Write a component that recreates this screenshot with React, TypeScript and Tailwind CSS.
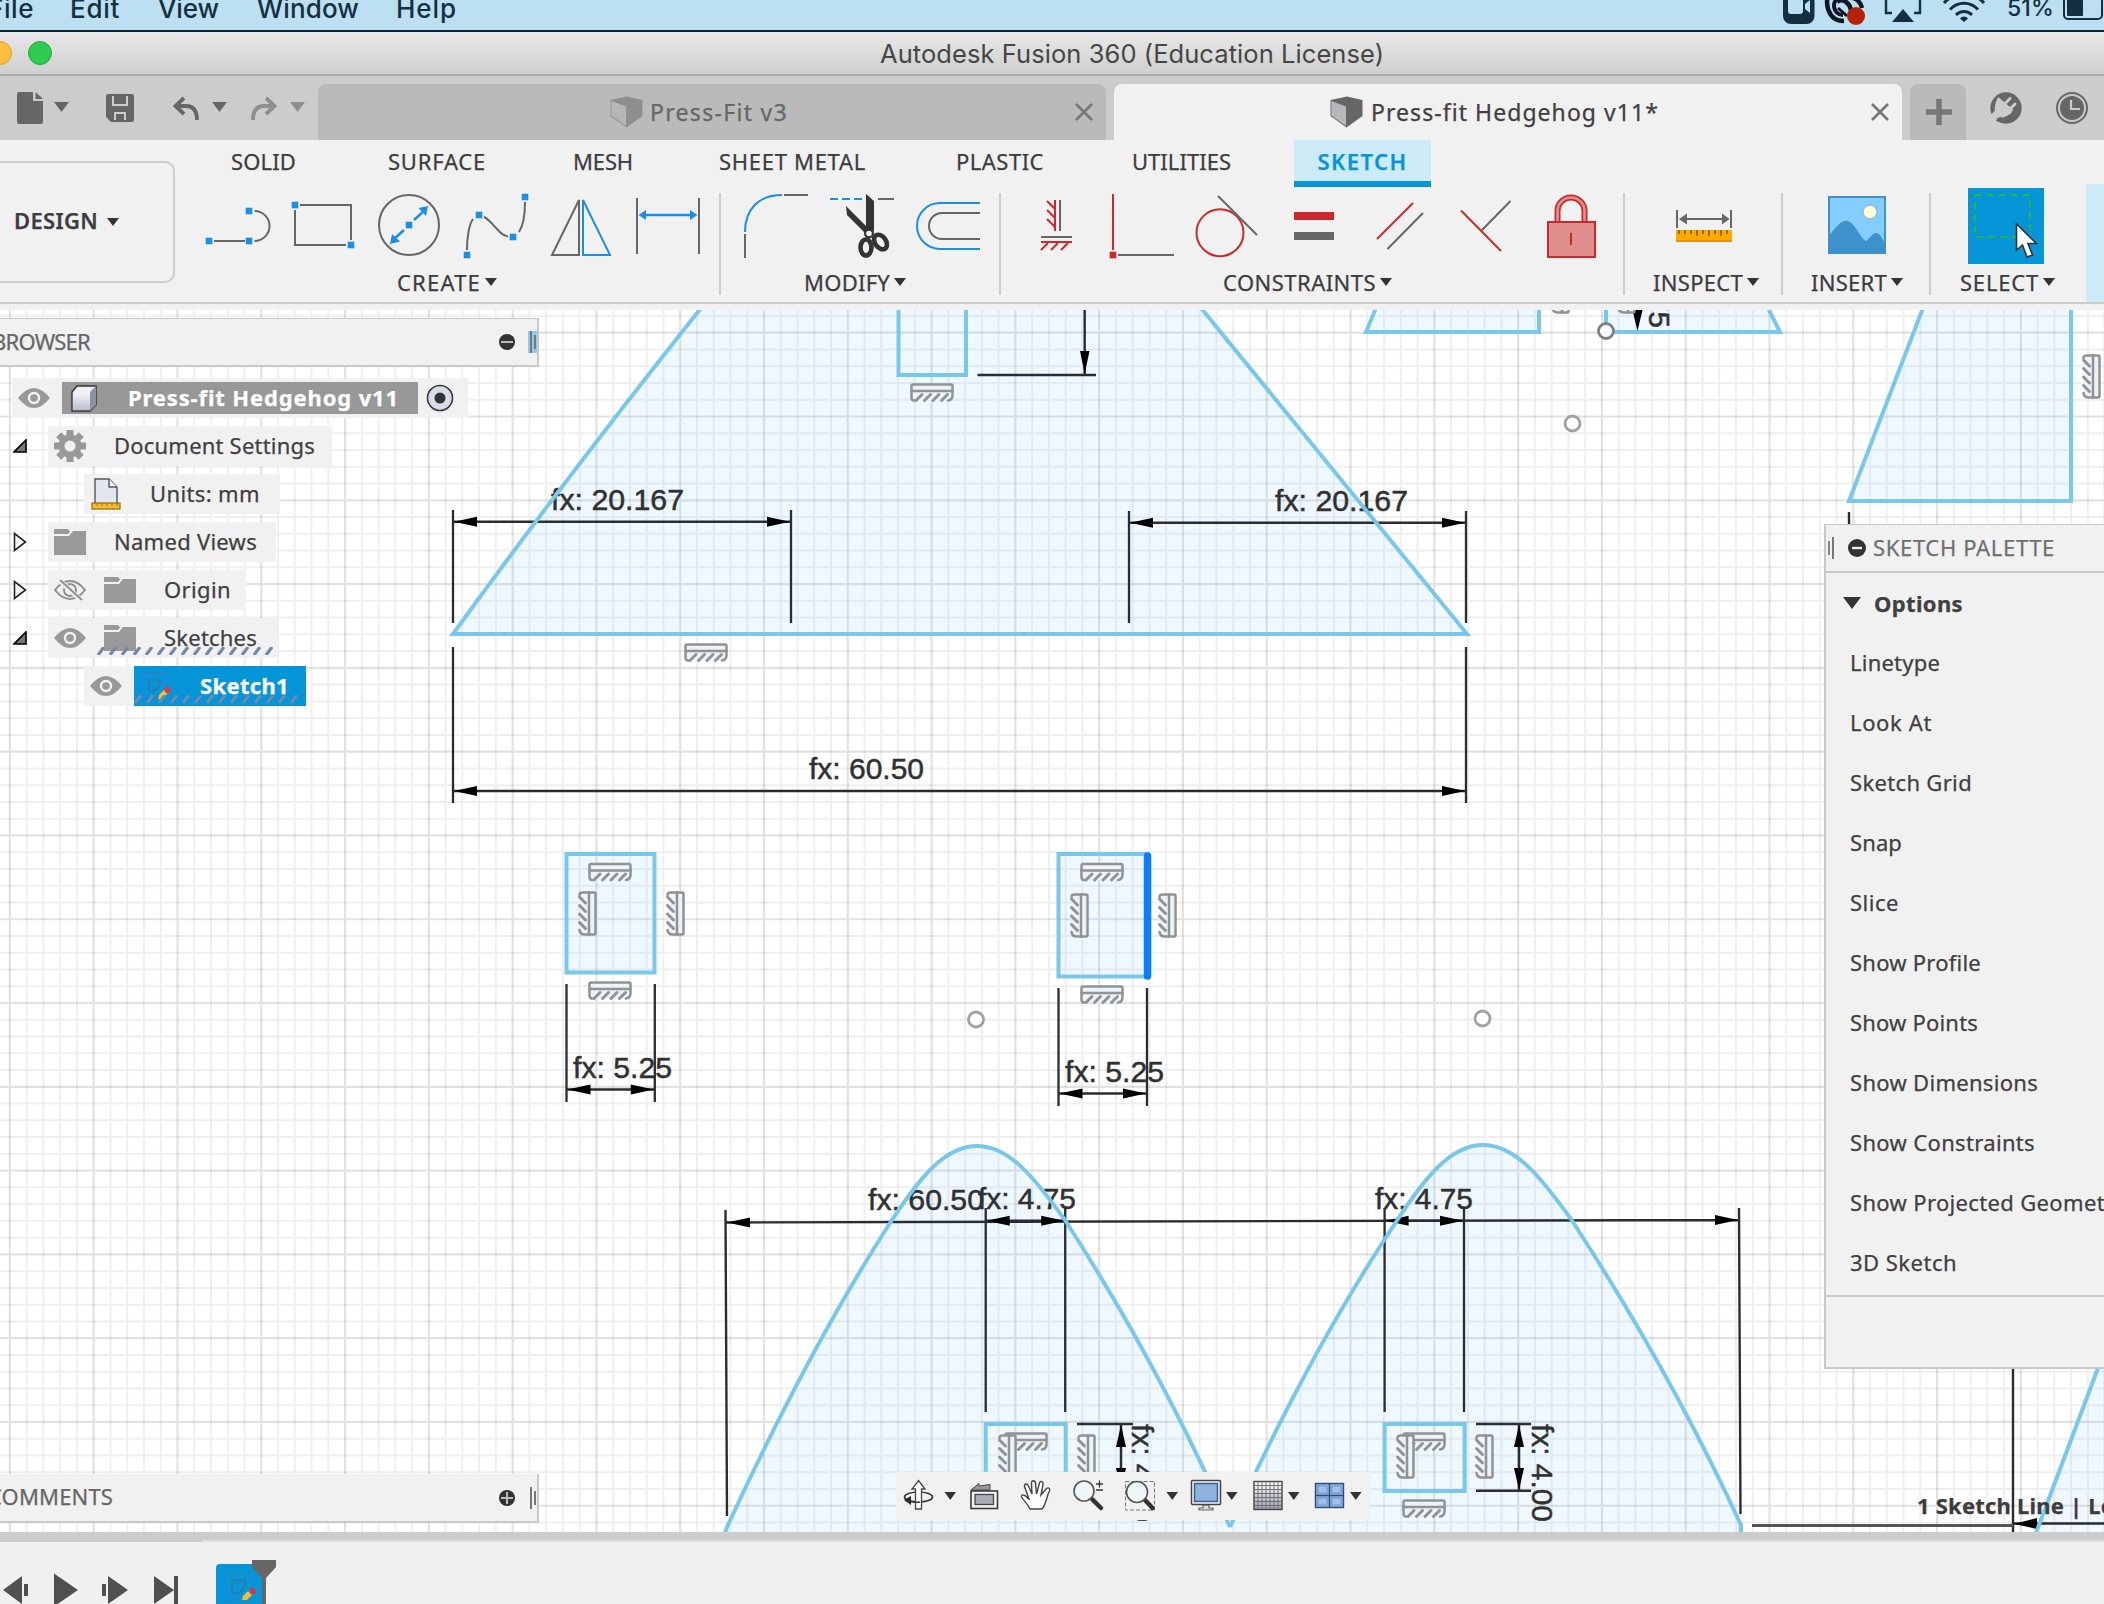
import React, { useLayoutEffect, useRef, useState } from "react";

const UI = "font-['Noto_Sans','Open_Sans',sans-serif] [-webkit-text-stroke:0.25px_currentColor]";
const SYS = "font-['Inter',sans-serif]";

/* A single line of text whose tracking is adjusted so that it fills a given width. */
function Fit({ w, className = "", children }: { w: number; className?: string; children: string }) {
  const ref = useRef<HTMLSpanElement>(null);
  const [ls, setLs] = useState(0);
  useLayoutEffect(() => {
    const el = ref.current;
    if (!el) return;
    el.style.letterSpacing = "0px";
    const natural = el.getBoundingClientRect().width;
    const next = (w - natural) / children.length;
    el.style.letterSpacing = next + "px";
    setLs(next);
  }, [w, children]);
  return (
    <span ref={ref} className={"inline-block shrink-0 whitespace-pre " + className} style={{ letterSpacing: ls }}>
      {children}
    </span>
  );
}

/* Icon drawn in window coordinates; the viewBox is the icon's own box. */
function Art({ x, y, w, h, className = "", children }: { x: number; y: number; w: number; h: number; className?: string; children?: React.ReactNode }) {
  return (
    <svg width={w} height={h} viewBox={`${x} ${y} ${w} ${h}`} className={"block shrink-0 " + className} fill="none">
      {children}
    </svg>
  );
}

const Tri = ({ className = "" }: { className?: string }) => (
  <svg width="12" height="8" viewBox="0 0 12 8" className={"block shrink-0 " + className}>
    <path d="M0 0H12L6 8Z" fill="#333" />
  </svg>
);

const Sq = ({ x, y, c = "#1b8ee8" }: { x: number; y: number; c?: string }) => <rect x={x - 3.3} y={y - 3.3} width="6.6" height="6.6" fill={c} />;

/* ---------- macOS menu bar ---------- */
function MenuBar() {
  return (
    <div className={"flex h-[32px] shrink-0 items-start overflow-hidden border-b-2 border-[#0e2435] bg-[#bcdff1] text-[26px] leading-[18px] font-medium text-[#12303f] " + SYS}>
      <Fit w={46} className="-ml-[12px]">File</Fit>
      <Fit w={50} className="ml-[36px]">Edit</Fit>
      <Fit w={61} className="ml-[38px]">View</Fit>
      <Fit w={102} className="ml-[38px]">Window</Fit>
      <Fit w={61} className="ml-[37px]">Help</Fit>
      <Art x={1780} y={0} w={36} h={30} className="ml-[1324px]">
        <rect x="1782" y="-9" width="31.5" height="33" rx="8" fill="#12303f" />
        <rect x="1787" y="-2" width="15" height="16" rx="3" fill="#bcdff1" />
        <path d="M1804 4L1809 0V13L1804 9Z" fill="#bcdff1" />
      </Art>
      <Art x={1820} y={0} w={50} h={30} className="ml-[4px]">
        <path d="M1828 -6C1824 2 1826 21 1843 21" stroke="#0a1626" strokeWidth="4.500" />
        <path d="M1840 -3C1829 0 1832 15 1842 15" stroke="#0a1626" strokeWidth="4" />
        <path d="M1836 2C1842 -3 1850 4 1850 12M1840 -2C1852 -5 1859 0 1861 8" stroke="#0a1626" strokeWidth="4.500" />
        <path d="M1837 8L1846 16" stroke="#0a1626" strokeWidth="3" />
        <circle cx="1855" cy="16" r="9" fill="#b52200" />
      </Art>
      <Art x={1882} y={0} w={40} h={30} className="ml-[12px]">
        <path d="M1891 13H1885V-3M1913 13H1919V-3" stroke="#12303f" strokeWidth="2.4" />
        <path d="M1902 9L1913 22H1891Z" fill="#12303f" />
      </Art>
      <Art x={1940} y={0} w={46} h={30} className="ml-[18px]">
        <g stroke="#12303f" strokeWidth="3">
          <path d="M1943 3A27 27 0 0 1 1983 3" />
          <path d="M1949 9.5A19 19 0 0 1 1977 9.5" />
          <path d="M1955 15A11 11 0 0 1 1971 15" />
        </g>
        <path d="M1959 18.5A5 5 0 0 1 1967 18.5L1963 22Z" fill="#12303f" />
      </Art>
      <Fit w={47} className="ml-[20px] text-[23px] leading-[16px]">51%</Fit>
      <Art x={2060} y={0} w={44} h={30} className="ml-[7px]">
        <rect x="2063" y="-6" width="38" height="25" rx="4" stroke="#12303f" strokeWidth="2" />
        <rect x="2066" y="-3" width="16" height="19" rx="1" fill="#12303f" />
      </Art>
    </div>
  );
}

function TitleBar() {
  return (
    <div className={"flex h-[44px] shrink-0 items-center border-b-2 border-[#adadad] bg-linear-to-b from-[#e9e9e9] to-[#cfcfcf] " + SYS}>
      <div className="-ml-[12px] size-[24px] rounded-full border border-[#e09c2c] bg-[#ffbd3e]" />
      <div className="ml-[16px] size-[24px] rounded-full border border-[#25a83a] bg-[#2ecb4c]" />
      <Fit w={504} className="mt-[2px] ml-[828px] text-[25.5px] leading-[40px] text-[#464646]">Autodesk Fusion 360 (Education License)</Fit>
    </div>
  );
}

/* ---------- document tabs ---------- */
const Cube = ({ dim }: { dim?: boolean }) => (
  <svg width="33" height="32" viewBox="0 0 33 32" className="block shrink-0">
    <path d="M0.5 4L17 0.5L32.5 4V20L16.5 31.5L0.5 20Z" fill={dim ? "#8f8f8f" : "#666"} />
    <path d="M1.3 5L16 10.5V30L1.3 19.5Z" fill={dim ? "#b3b7b7" : "#b4b8b8"} />
  </svg>
);
const Cross = () => (
  <svg width="18" height="18" viewBox="0 0 18 18" className="block shrink-0">
    <path d="M1 1L17 17M17 1L1 17" stroke="#777" strokeWidth="2.6" />
  </svg>
);

function TabBar() {
  return (
    <div className={"flex h-[64px] shrink-0 bg-[#ccc] text-[23px] " + UI}>
      <Art x={0} y={76} w={80} h={64}>
        <path d="M19 92H33V101H43V122Q43 124 41 124H19Q17 124 17 122V94Q17 92 19 92Z" fill="#666" />
        <path d="M35.5 92L43 99H35.5Z" fill="#666" />
        <path d="M54 102H69L61.5 112Z" fill="#666" />
      </Art>
      <Art x={80} y={76} w={70} h={64}>
        <path d="M108 94H132Q134 94 134 96V120Q134 122 132 122H111L106 117V96Q106 94 108 94Z" fill="#666" />
        <path d="M113 96V105H127V96M115 120V113H125V120" stroke="#ccc" strokeWidth="2" />
      </Art>
      <Art x={150} y={76} w={90} h={64}>
        <path d="M184 98L175.5 106L184 114M176 106H186C194 106 197 112 197 120" stroke="#666" strokeWidth="3.8" />
        <path d="M212 102H227L219.500 112Z" fill="#666" />
      </Art>
      <Art x={240} y={76} w={78} h={64}>
        <path d="M266 98L274.500 106L266 114M274 106H264C256 106 253 112 253 120" stroke="#8e8e8e" strokeWidth="3.8" />
        <path d="M290 102H305L297.500 112Z" fill="#8e8e8e" />
      </Art>
      <div className="mt-[8px] flex w-[788px] items-center rounded-t-lg bg-[#bababa] pr-[13px] pl-[292px] text-[#666]">
        <Cube dim />
        <Fit w={138} className="ml-[7px]">Press-Fit v3</Fit>
        <div className="ml-auto"><Cross /></div>
      </div>
      <div className="mt-[8px] ml-[8px] flex w-[788px] items-center rounded-t-lg bg-[#f1f1f1] pr-[13px] pl-[216px] text-[#404040]">
        <Cube />
        <Fit w={288} className="ml-[8px]">Press-fit Hedgehog v11*</Fit>
        <div className="ml-auto"><Cross /></div>
      </div>
      <div className="mt-[8px] ml-[8px] flex w-[56px] items-center justify-center rounded-t-lg bg-[#bababa] pl-[2px]">
        <svg width="26" height="26" viewBox="0 0 26 26"><path d="M13 0V26M0 13H26" stroke="#777" strokeWidth="5.500" /></svg>
      </div>
      <Art x={1966} y={76} w={76} h={64}>
        <circle cx="2006" cy="108" r="15.700" fill="#666" />
        <path d="M1998.500 98.500L2012 110L2010 113L2003 116.500L1999 115.500L1994 121L1990 117L1996 111C1995 107 1996 104 1998.500 98.500Z" fill="#ccc" stroke="#ccc" strokeLinejoin="round" strokeWidth="2" />
        <path d="M2005.500 103L2010 98.500M2010.500 108.500L2015 104" stroke="#ccc" strokeWidth="3" strokeLinecap="round" />
        <path d="M1991 122L1998 115.500" stroke="#ccc" strokeWidth="5" />
        <path d="M1998 117L2000 122L1996 121Z" fill="#666" />
      </Art>
      <Art x={2042} y={76} w={62} h={64}>
        <circle cx="2072" cy="108" r="15" stroke="#666" strokeWidth="2" />
        <circle cx="2072" cy="108" r="12" fill="#666" />
        <path d="M2071 100V109H2080" stroke="#ccc" strokeWidth="2.200" />
      </Art>
    </div>
  );
}

/* ---------- ribbon ---------- */
const G = "#666";
const B = "#1b8ee8";
const R = "#cc2a2a";
const Slot = ({ x, children }: { x: number; children: React.ReactNode }) => <Art x={x} y={187} w={86} h={82}>{children}</Art>;

function Group({ width, pad, icons, label, labelPad, labelWidth, sep = true }: { width: string; pad: string; icons: React.ReactNode; label: string; labelPad: string; labelWidth: number; sep?: boolean }) {
  return (
    <div className={"flex h-[116px] shrink-0 justify-between " + width}>
      <div className="flex flex-col">
        <div className={"flex h-[82px] " + pad}>{icons}</div>
        <div className={"-mt-px flex h-[28px] items-center leading-[28px] " + labelPad}>
          <Fit w={labelWidth}>{label}</Fit>
          <Tri className="ml-[4px]" />
        </div>
      </div>
      {sep && <div className="mt-[6px] h-[102px] w-[2px] bg-[#ccc]" />}
    </div>
  );
}

function CreateIcons() {
  return (
    <>
      <Slot x={195}>
        <path d="M214 241H245M254.500 211A15 15 0 0 1 254.500 241" stroke={G} strokeWidth="2" />
        <Sq x={209} y={241} /><Sq x={249} y={241} /><Sq x={249} y={211} />
      </Slot>
      <Slot x={281}>
        <path d="M300 205H351V240M346 245H295V210" stroke={G} strokeWidth="2" />
        <Sq x={295} y={205} /><Sq x={351} y={245} />
      </Slot>
      <Slot x={367}>
        <circle cx="409" cy="225" r="30" stroke={G} strokeWidth="2" />
        <path d="M394 239L404 230M414 220L424 211" stroke={B} strokeWidth="2.500" />
        <path d="M390 244L392 234L400 241.500ZM428 206L418.500 208L426 216Z" fill={B} />
        <Sq x={409} y={225} />
      </Slot>
      <Slot x={453}>
        <path d="M467 250C467 238 469 224 473 219M484 217C493 221 499 236 508 236.500M519 232C523 226 525 215 525 202" stroke={G} strokeWidth="2" />
        <Sq x={467} y={255} /><Sq x={479} y={215} /><Sq x={513} y={237} /><Sq x={525} y={197} />
      </Slot>
      <Slot x={539}>
        <path d="M579 200V255H552Z" stroke={G} strokeWidth="2" />
        <path d="M583 200V255H610Z" stroke={B} strokeWidth="2" />
      </Slot>
      <Slot x={625}>
        <path d="M637 198V254M699 198V254" stroke={G} strokeWidth="2" />
        <path d="M643 215H693" stroke={B} strokeWidth="2.600" />
        <path d="M638.500 215L646 210V220ZM697.500 215L690 210V220Z" fill={B} />
      </Slot>
    </>
  );
}

function ModifyIcons() {
  return (
    <>
      <Slot x={733}>
        <path d="M745 232C745 210 758 195 782 195" stroke={B} strokeWidth="2" />
        <path d="M784 195H808M745 234V258" stroke={G} strokeWidth="2" />
      </Slot>
      <Slot x={819}>
        <path d="M830 199H838M842 199H850M854 199H862" stroke={B} strokeWidth="2" />
        <path d="M878 199H894" stroke={G} strokeWidth="2" />
        <path d="M866 194L874 201V231L869 236L866 234L847 215L846 206L866 226Z" fill="#333" />
        <ellipse cx="866" cy="247.500" rx="5.500" ry="8" stroke="#333" strokeWidth="4.600" />
        <ellipse cx="880.500" cy="242" rx="5.500" ry="8" transform="rotate(-35 880.500 242)" stroke="#333" strokeWidth="4.600" />
        <circle cx="869" cy="233.500" r="5" fill="#333" />
        <circle cx="869" cy="233.500" r="2.800" fill="#f1f1f1" />
      </Slot>
      <Slot x={905}>
        <path d="M980 203H940A23 23 0 0 0 940 249H980" stroke={B} strokeWidth="2" />
        <path d="M980 213H942A13 13 0 0 0 942 239H980" stroke={G} strokeWidth="2" />
      </Slot>
    </>
  );
}

function ConstraintIcons() {
  return (
    <>
      <Slot x={1013}>
        <path d="M1055 200V231M1047 201L1055 209M1047 210L1055 218M1047 219L1055 227M1041 242H1072M1041 250L1048 243M1051 250L1058 243M1061 250L1068 243" stroke={R} strokeWidth="2" />
        <path d="M1060 200V231M1041 237H1072" stroke={G} strokeWidth="2" />
      </Slot>
      <Slot x={1099}>
        <path d="M1113 194V250" stroke={R} strokeWidth="2" />
        <path d="M1118 255H1174" stroke={G} strokeWidth="2" />
        <Sq x={1113} y={255} c={R} />
      </Slot>
      <Slot x={1185}>
        <circle cx="1220" cy="232.700" r="23.500" stroke={R} strokeWidth="2" />
        <path d="M1218 196L1257 235" stroke={G} strokeWidth="2" />
      </Slot>
      <Slot x={1271}>
        <rect x="1294" y="212" width="40" height="8" fill={R} />
        <rect x="1294" y="232" width="40" height="8" fill={G} />
      </Slot>
      <Slot x={1357}>
        <path d="M1377 239L1413 203" stroke={R} strokeWidth="2" />
        <path d="M1387.500 249L1423 213" stroke={G} strokeWidth="2" />
      </Slot>
      <Slot x={1443}>
        <path d="M1461 210.500L1501 251" stroke={R} strokeWidth="2" />
        <path d="M1510.500 201L1481.500 230.500" stroke={G} strokeWidth="2" />
      </Slot>
      <Slot x={1529}>
        <path d="M1557.500 222V211A13.500 13.500 0 0 1 1584.500 211V222" stroke={R} strokeWidth="6" />
        <path d="M1557.500 222V211A13.500 13.500 0 0 1 1584.500 211V222" stroke="#e08e8e" strokeWidth="2.600" />
        <rect x="1548" y="222" width="47" height="35" fill="#e08e8e" stroke={R} strokeWidth="2" />
        <path d="M1571 233V245" stroke={R} strokeWidth="2" />
      </Slot>
    </>
  );
}

const InspectIcon = () => (
  <Slot x={1661}>
    <path d="M1677 210V228M1731 210V228M1684 219H1724" stroke={G} strokeWidth="2" />
    <path d="M1679 219L1687 213.500V224.500ZM1729.500 219L1722 213.500V224.500Z" fill={G} />
    <rect x="1676" y="230" width="56" height="12" fill="#ffa800" />
    <rect x="1676" y="240" width="56" height="2" fill="#e39400" />
    <path d="M1679 230V234M1685 230V234M1691 230V234M1697 230V236M1703 230V234M1709 230V236M1715 230V234M1721 230V236M1727 230V234" stroke="#7a5a1a" strokeWidth="1.500" />
  </Slot>
);
const InsertIcon = () => (
  <Slot x={1814}>
    <rect x="1829" y="197" width="56" height="56" fill="#85ccff" />
    <path d="M1829 236C1838 224 1844 218 1850 222C1856 226 1862 240 1866 241C1870 238 1873 232 1877 233C1881 235 1882 239 1885 243V253H1829Z" fill="#3e92cc" />
    <circle cx="1870" cy="212" r="7" fill="#ffffcf" stroke="#8fc1dd" strokeWidth="1.500" />
    <rect x="1829" y="197" width="56" height="56" stroke="#3e92cc" strokeWidth="2" />
  </Slot>
);
const SelectIcon = () => (
  <Slot x={1963}>
    <rect x="1968" y="188" width="76" height="76" fill="#0696d7" />
    <rect x="1975" y="195" width="55" height="42" stroke="#2db24a" strokeWidth="2" strokeDasharray="7 5" />
    <path d="M2016.500 224V250L2022.500 245L2027 257L2032.500 255L2028 243.500H2036.500Z" fill="#fff" stroke="#333" strokeWidth="1.600" />
  </Slot>
);

function Ribbon() {
  return (
    <div className={"flex h-[170px] shrink-0 bg-[#f1f1f1] text-[22px] text-[#3c3c3c] " + UI}>
      <div className="flex h-[164px] w-full border-b-2 border-[#ccc]">
        <div className="flex w-[195px] shrink-0 items-start">
          <div className="mt-[21px] -ml-[20px] flex h-[122px] w-[195px] items-center rounded-[10px] border-2 border-[#ccc] pl-[32px] font-semibold">
            <Fit w={84} className="-mt-[3px]">DESIGN</Fit>
            <Tri className="ml-[9px]" />
          </div>
        </div>
        <div className="flex flex-col">
          <div className="flex h-[47px] leading-[42px]">
            <Fit w={65} className="ml-[36px]">SOLID</Fit>
            <Fit w={98} className="ml-[92px]">SURFACE</Fit>
            <Fit w={60} className="ml-[87px]">MESH</Fit>
            <Fit w={147} className="ml-[86px]">SHEET METAL</Fit>
            <Fit w={88} className="ml-[90px]">PLASTIC</Fit>
            <Fit w={99} className="ml-[88px]">UTILITIES</Fit>
            <div className="ml-[63px] flex h-[47px] w-[137px] justify-center border-b-[6px] border-[#0696d7] bg-[#cdebf6] font-semibold text-[#0696d7]">
              <Fit w={90}>SKETCH</Fit>
            </div>
          </div>
          <div className="flex">
            <Group width="w-[526px]" pad="" icons={<CreateIcons />} label="CREATE" labelPad="pl-[202px]" labelWidth={84} />
            <Group width="w-[280px]" pad="pl-[12px]" icons={<ModifyIcons />} label="MODIFY" labelPad="pl-[83px]" labelWidth={86} />
            <Group width="w-[624px]" pad="pl-[12px]" icons={<ConstraintIcons />} label="CONSTRAINTS" labelPad="pl-[222px]" labelWidth={153} />
            <Group width="w-[158px]" pad="pl-[36px]" icons={<InspectIcon />} label="INSPECT" labelPad="pl-[28px]" labelWidth={90} />
            <Group width="w-[148px]" pad="pl-[31px]" icons={<InsertIcon />} label="INSERT" labelPad="pl-[28px]" labelWidth={76} />
            <Group width="w-[155px]" pad="pl-[32px]" icons={<SelectIcon />} label="SELECT" labelPad="pl-[29px]" labelWidth={79} sep={false} />
            <div className="-mt-[3px] h-[118px] w-[18px] shrink-0 bg-[#cdebf6]" />
          </div>
        </div>
      </div>
    </div>
  );
}

/* ---------- sketch canvas ---------- */
const INK = "#2a2d2f";
const LINE = "#79c7eb";
const GRID = 83.79;

function GridLines() {
  const minor: string[] = [];
  const major: string[] = [];
  for (let i = -1; i < 127; i++) (i % 5 === 0 ? major : minor).push(`M${(9.9 + (i * GRID) / 5).toFixed(2)} 310V1532`);
  for (let i = -1; i < 73; i++) (i % 5 === 0 ? major : minor).push(`M0 ${(332.7 + (i * GRID) / 5).toFixed(2)}H2104`);
  return (
    <g>
      <path d={minor.join("")} stroke="#000" strokeOpacity="0.062" strokeWidth="2" />
      <path d={major.join("")} stroke="#000" strokeOpacity="0.115" strokeWidth="2.200" />
    </g>
  );
}

function Glyph({ n }: { n: number }) {
  const teeth = [6, 14.5, 23, 31.5].map((t) => `M${t} 17.5L${t + 6} 11.5`).join("");
  return (
    <g stroke="#909395" strokeWidth="2.500" strokeLinecap="round">
      <path d={`M4 17.500Q1.500 17.500 1.500 14.500V3Q1.500 1.500 3 1.500H${n - 3}Q${n - 1.5} 1.500 ${n - 1.5} 3V13Q${n - 2} 17 ${n - 6} 17.500`} fill="#edf3f6" />
      <path d={`M1.500 8H${n - 1.5}`} />
      <path d={teeth} strokeWidth="3" />
    </g>
  );
}
const HGlyph = ({ x, y }: { x: number; y: number }) => <g transform={`translate(${x} ${y})`}><Glyph n={44} /></g>;
const VGlyph = ({ x, y }: { x: number; y: number }) => <g transform={`translate(${x + 19} ${y}) rotate(90)`}><Glyph n={45} /></g>;

/* Horizontal dimension: two extension lines joined by a double-headed arrow. */
function HDim({ x1, x2, y, top, bottom }: { x1: number; x2: number; y: number; top: number; bottom: number }) {
  return (
    <g>
      <path d={`M${x1} ${top}V${bottom}M${x2} ${top}V${bottom}`} stroke={INK} strokeWidth="2.300" />
      <path d={`M${x1} ${y}H${x2}`} stroke={INK} strokeWidth="2.500" />
      <path d={`M${x1 + 1} ${y}L${x1 + 24} ${y - 5}V${y + 5}ZM${x2 - 1} ${y}L${x2 - 24} ${y - 5}V${y + 5}Z`} fill="#000" />
    </g>
  );
}
const NUM = "font-['Liberation_Sans',sans-serif]";
const Num = ({ x, y, w, children }: { x: number; y: number; w: number; children: string }) => (
  <text x={x} y={y} textLength={w} lengthAdjust="spacingAndGlyphs" fontSize="30" fill="#2f3133" stroke="#2f3133" strokeWidth="0.500" className={NUM}>{children}</text>
);
const VNum = ({ x, y, w, children }: { x: number; y: number; w: number; children: string }) => (
  <text transform={`translate(${x} ${y}) rotate(90)`} textLength={w} lengthAdjust="spacingAndGlyphs" fontSize="30" fill="#2f3133" stroke="#2f3133" strokeWidth="0.500" className={NUM}>{children}</text>
);
const Dot = ({ x, y, dark }: { x: number; y: number; dark?: boolean }) => <circle cx={x} cy={y} r="7.500" fill="#fff" stroke={dark ? "#808080" : "#a2a2a2"} strokeWidth="2.800" />;

const BODY = "M453 634Q562 483 701 308H1201Q1330 465 1467 634Z";
const HUMP1 = "M725 1533L727 1527C780 1412 836 1307 890 1223C920 1177 945 1146 977 1146C1009 1146 1034 1177 1065 1220C1120 1305 1180 1412 1230 1527";
const HUMP2 = "M1230 1527C1286 1404 1342 1303 1396 1222C1426 1176 1451 1145 1483 1145C1515 1145 1540 1176 1571 1219C1627 1305 1688 1410 1741 1525V1533";

function Canvas() {
  return (
    <svg width="2104" height="1222" viewBox="0 310 2104 1222" className="absolute inset-0 block" fill="none">
      <rect x="0" y="310" width="2104" height="1222" fill="#fff" />
      <GridLines />
      <g fill="#84ccf5" fillOpacity="0.13">
        <path d={BODY} />
        <path d="M1376 308L1366 332H1539V308ZM1606 308V332H1780L1768 308Z" />
        <path d="M1923 308L1849 501H2071V308Z" />
        <rect x="566.500" y="854" width="88" height="118.500" />
        <rect x="1058.500" y="854" width="88.500" height="122.500" />
        <path d={HUMP1 + "V1533Z"} />
        <path d={HUMP2 + "H1230Z"} />
        <path d="M2098 1368L2036 1533H2104V1368Z" />
      </g>

      <HDim x1={453} x2={791} y={521.7} top={510} bottom={623} />
      <HDim x1={1129} x2={1466} y={522.7} top={511} bottom={623} />
      <HDim x1={453} x2={1466} y={791} top={647} bottom={803} />
      <HDim x1={566.5} x2={654.8} y={1089.5} top={984} bottom={1102} />
      <HDim x1={1058.5} x2={1147} y={1093.5} top={988} bottom={1106} />
      <path d="M725.500 1210L727 1516M1739 1208L1740.500 1514M726 1222.500L1740 1220" stroke={INK} strokeWidth="2.400" />
      <path d="M727 1222.500L750 1217.500V1227.500ZM1738 1220L1715 1215V1225Z" fill="#000" />
      <HDim x1={985.7} x2={1065.2} y={1220.7} top={1208} bottom={1412} />
      <HDim x1={1384.6} x2={1464} y={1220.7} top={1208} bottom={1412} />
      <path d="M1084.700 310V374M977.500 375H1096" stroke={INK} strokeWidth="2.400" />
      <path d="M1084.700 374L1080 351H1089.500Z" fill="#000" />
      <path d="M1637.500 331L1632 308H1643Z" fill="#000" />
      <path d="M1849 512V526M2013 1368V1533M2013 1523.500H2104" stroke={INK} strokeWidth="2.400" />
      <path d="M1752 1525.500H2013" stroke="#555" strokeWidth="3" />
      <path d="M2014 1524L2037 1518V1529Z" fill="#000" />
      <path d="M1476 1424H1531M1476 1490.700H1531M1519 1424V1490M1077 1424H1133M1077 1490.700H1133M1121 1424V1490" stroke={INK} strokeWidth="2.500" />
      <path d="M1519 1425L1514 1447H1524ZM1519 1490L1514 1468H1524ZM1121 1425L1116 1447H1126ZM1121 1490L1116 1468H1126Z" fill="#000" />

      <Num x={551} y={509.5} w={133}>fx: 20.167</Num>
      <Num x={1275} y={510.5} w={133}>fx: 20.167</Num>
      <Num x={809} y={779} w={115}>fx: 60.50</Num>
      <Num x={573} y={1077.5} w={99}>fx: 5.25</Num>
      <Num x={1065} y={1081.5} w={99}>fx: 5.25</Num>
      <Num x={868} y={1209.5} w={116}>fx: 60.50</Num>
      <Num x={978} y={1208.5} w={98}>fx: 4.75</Num>
      <Num x={1375} y={1208.5} w={98}>fx: 4.75</Num>
      <VNum x={1532} y={1424} w={98}>fx: 4.00</VNum>
      <VNum x={1132} y={1424} w={98}>fx: 4.00</VNum>
      <VNum x={1649} y={231} w={97}>fx: 4.75</VNum>

      <g stroke={LINE} strokeWidth="4">
        <path d={BODY} />
        <path d="M898.500 308V375H966V308" />
        <path d="M1376 308L1366 332H1539V308M1606 308V332H1780L1768 308" />
        <path d="M1923 308L1849 501H2071V308" />
        <rect x="566.500" y="854" width="88" height="118.500" />
        <rect x="1058.500" y="854" width="88.500" height="122.500" />
        <path d={HUMP1} />
        <path d={HUMP2} />
        <rect x="985.700" y="1424" width="80" height="67" />
        <rect x="1384.600" y="1424" width="80" height="67" />
        <path d="M2098 1368L2036 1533" />
      </g>
      <path d="M1147.500 856V976" stroke="#0a7cff" strokeWidth="7.500" strokeLinecap="round" />

      <HGlyph x={910} y={383} />
      <HGlyph x={684} y={643} />
      <HGlyph x={588} y={862.5} />
      <HGlyph x={588} y={981} />
      <HGlyph x={1080} y={862.5} />
      <HGlyph x={1080} y={985} />
      <HGlyph x={1004} y={1432} />
      <HGlyph x={1004} y={1499} />
      <HGlyph x={1402} y={1432} />
      <HGlyph x={1402} y={1499} />
      <VGlyph x={578} y={891} />
      <VGlyph x={666} y={891} />
      <VGlyph x={1070} y={893} />
      <VGlyph x={1158} y={893} />
      <VGlyph x={998} y={1434} />
      <VGlyph x={1077} y={1434} />
      <VGlyph x={1396} y={1434} />
      <VGlyph x={1475} y={1434} />
      <VGlyph x={2082} y={354} />
      <VGlyph x={1551} y={269} />
      <VGlyph x={1617} y={269} />
      <Dot x={1606} y={331} dark />
      <Dot x={1572.5} y={423.5} />
      <Dot x={976} y={1019.5} />
      <Dot x={1482.5} y={1018.5} />
    </svg>
  );
}

/* ---------- browser tree ---------- */
const Eye = () => (
  <svg width="32" height="20" viewBox="0 0 32 20" className="block shrink-0">
    <path d="M0 10Q8 0 16 0T32 10Q24 20 16 20T0 10Z" fill="#999" />
    <circle cx="16" cy="10" r="5" fill="none" stroke="#f1f1f1" strokeWidth="2.400" />
  </svg>
);
const EyeOff = () => (
  <svg width="32" height="22" viewBox="0 0 32 22" className="block shrink-0" fill="none" stroke="#8f8f8f" strokeWidth="2">
    <path d="M1 11Q8 2 16 2T31 11Q24 20 16 20T1 11Z" />
    <circle cx="16" cy="11" r="6" />
    <path d="M5 1L27 21" stroke="#f1f1f1" strokeWidth="5" />
    <path d="M6 1L28 21" />
  </svg>
);
const Folder = () => (
  <svg width="32" height="26" viewBox="0 0 32 26" className="block shrink-0">
    <path d="M0 0H14L16 2.500L14 5H0Z" fill="#999" />
    <path d="M0 7H15L19 2H32V26H0Z" fill="#999" />
  </svg>
);
const Gear = () => (
  <svg width="32" height="32" viewBox="-16 -16 32 32" className="block shrink-0">
    {[0, 45, 90, 135].map((a) => (
      <rect key={a} x="-3.500" y="-16" width="7" height="32" fill="#999" transform={`rotate(${a})`} />
    ))}
    <circle r="11.500" fill="#999" />
    <circle r="5.500" fill="#f1f1f1" />
  </svg>
);
const Body = () => (
  <svg width="26" height="27" viewBox="0 0 26 27" className="block shrink-0">
    <defs>
      <linearGradient id="bodyFace" x1="0" y1="0" x2="0" y2="1"><stop offset="0" stopColor="#f4f5f8" /><stop offset="1" stopColor="#b9bfcc" /></linearGradient>
    </defs>
    <path d="M1 7L6 1H25V20L19 26H1Z" fill="#eef0f4" stroke="#333" strokeWidth="1.400" />
    <path d="M19 7L25 1V20L19 26Z" fill="#8a92a2" />
    <path d="M2 8H19V25H2Z" fill="url(#bodyFace)" />
  </svg>
);
const UnitsDoc = () => (
  <svg width="30" height="32" viewBox="0 0 30 32" className="block shrink-0">
    <path d="M4 1H18L26 9V26H4Z" fill="#e3e6ee" stroke="#555" strokeWidth="1.400" />
    <path d="M18 1V9H26" fill="#fff" stroke="#555" strokeWidth="1.400" />
    <rect x="1" y="25" width="28" height="6" fill="#f4bd2b" stroke="#9a6a10" strokeWidth="1.200" />
    <path d="M6 25V28M11 25V28M16 25V28M21 25V28M26 25V28" stroke="#9a6a10" />
  </svg>
);
const SketchIcon = () => (
  <svg width="32" height="32" viewBox="0 0 32 32" className="block shrink-0" fill="none">
    <path d="M3 3H27M3 29H19" stroke="#2f80ba" strokeWidth="1.600" />
    <path d="M2.500 2V30M27 2V20" stroke="#1b86f0" strokeWidth="1.600" />
    <path d="M9 9V22M9 10H20C21 15 18 20 11 22" stroke="#3477a3" strokeWidth="1.600" />
    <path d="M18 29L19 25L24 20L27.500 23.500L22 29Z" fill="#f9bb3c" />
    <circle cx="27.500" cy="20" r="3" fill="#ee3135" />
  </svg>
);
const Closed = () => (
  <svg width="14" height="20" viewBox="0 0 14 20" className="ml-[13px] block shrink-0"><path d="M1.500 1.500V18.500L12.500 10Z" fill="#fff" stroke="#222" strokeWidth="1.600" /></svg>
);
const Open = () => (
  <svg width="14" height="14" viewBox="0 0 14 14" className="ml-[13px] block shrink-0"><path d="M13 1V13H1Z" fill="#777" stroke="#000" strokeWidth="1.600" /></svg>
);
const Hatch = ({ n }: { n: number }) => (
  <svg width={n * 12} height="8" viewBox={`0 0 ${n * 12} 8`} className="block">
    {Array.from({ length: n }, (_, i) => (
      <path key={i} d={`M${i * 12 + 1} 8L${i * 12 + 7} 0`} stroke="#7187ab" strokeWidth="3.200" />
    ))}
  </svg>
);

function PanelHeader({ label, width, shift, plus, top }: { label: string; width: number; shift: string; plus?: boolean; top: string }) {
  return (
    <div className={"flex h-[49px] w-[539px] items-center border-r-2 border-b-2 border-[#c8c8c8] bg-[#f1f1f1] text-[22px] text-[#666] " + top}>
      <Fit w={width} className={"-mt-[3px] " + shift}>{label}</Fit>
      <div className="ml-auto flex items-center">
        <svg width="16" height="16" viewBox="0 0 16 16" className="mr-[13px] block">
          <circle cx="8" cy="8" r="8" fill="#333" />
          <path d={plus ? "M2 8H14M8 2V14" : "M2 8H14"} stroke="#bbb" strokeWidth="2" />
        </svg>
        <div className={plus ? "flex h-[22px] w-[9px] items-center gap-[2px]" : "flex h-[22px] w-[9px] items-center gap-[2px] bg-[#8fcaf3]"}>
          <div className="ml-[2px] h-[22px] w-[2px] bg-[#777]" />
          <div className="h-[14px] w-[2px] bg-[#777]" />
        </div>
      </div>
    </div>
  );
}

function Browser() {
  const row = "flex h-[40px] items-center bg-[#f1f1f1]";
  return (
    <div className={"absolute top-[8px] left-0 flex flex-col text-[22px] leading-[36px] text-[#404040] " + UI}>
      <PanelHeader label="BROWSER" width={98} shift="-ml-[8px]" top="border-t" />
      <div className="mt-[11px] flex flex-col gap-[8px]">
        <div className="flex">
          <div className={row + " ml-[12px] w-[456px] pl-[6px]"}>
            <Eye />
            <div className="ml-[12px] flex h-[32px] w-[356px] items-center bg-[#989898] pl-[9px] font-bold text-white">
              <Body />
              <Fit w={271} className="ml-[31px] -mt-[2px]">Press-fit Hedgehog v11</Fit>
            </div>
            <svg width="28" height="28" viewBox="0 0 28 28" className="ml-[8px] block">
              <circle cx="14" cy="14" r="12.500" fill="#d8dce6" stroke="#3a3a3a" strokeWidth="1.600" />
              <circle cx="14" cy="14" r="5.500" fill="#333" />
            </svg>
          </div>
        </div>
        <div className="flex items-center">
          <Open />
          <div className={row + " ml-[21px] w-[284px] pl-[6px]"}><Gear /><Fit w={201} className="ml-[28px] -mt-[3px]">Document Settings</Fit></div>
        </div>
        <div className="flex items-center">
          <div className={row + " ml-[84px] w-[196px] pl-[7px]"}><UnitsDoc /><Fit w={110} className="ml-[29px] -mt-[3px]">Units: mm</Fit></div>
        </div>
        <div className="flex items-center">
          <Closed />
          <div className={row + " ml-[21px] w-[228px] pl-[6px]"}><Folder /><Fit w={143} className="ml-[28px] -mt-[3px]">Named Views</Fit></div>
        </div>
        <div className="flex items-center">
          <Closed />
          <div className={row + " ml-[21px] w-[198px] pl-[6px]"}><EyeOff /><div className="ml-[18px]"><Folder /></div><Fit w={67} className="ml-[28px] -mt-[3px]">Origin</Fit></div>
        </div>
        <div className="flex items-center">
          <Open />
          <div className={row + " relative ml-[21px] w-[230px] pl-[6px]"}>
            <Eye /><div className="ml-[18px]"><Folder /></div><Fit w={93} className="ml-[28px] -mt-[3px]">Sketches</Fit>
            <div className="absolute bottom-[3px] left-[49px]"><Hatch n={15} /></div>
          </div>
        </div>
        <div className="flex items-center">
          <div className={row + " ml-[84px] w-[222px] pl-[6px]"}>
            <Eye />
            <div className="relative ml-[12px] flex h-[40px] w-[172px] items-center bg-[#0696d7] pl-[6px] font-bold text-white">
              <SketchIcon /><Fit w={89} className="ml-[28px] -mt-[3px]">Sketch1</Fit>
              <div className="absolute bottom-[3px] left-0"><Hatch n={14} /></div>
            </div>
          </div>
        </div>
      </div>
    </div>
  );
}

/* ---------- sketch palette ---------- */
const OPTIONS: [string, number][] = [
  ["Linetype", 90], ["Look At", 82], ["Sketch Grid", 122], ["Snap", 52], ["Slice", 49], ["Show Profile", 131],
  ["Show Points", 128], ["Show Dimensions", 188], ["Show Constraints", 185], ["Show Projected Geometries", 294], ["3D Sketch", 107],
];

function Palette() {
  return (
    <div className={"absolute top-[214px] left-[1824px] w-[280px] overflow-hidden border-l-2 border-[#c8c8c8] bg-[#f1f1f1] text-[22px] text-[#404040] " + UI}>
      <div className="flex h-[49px] items-center border-t border-b-2 border-[#c8c8c8] text-[#707070]">
        <div className="ml-[2px] h-[14px] w-[2px] bg-[#888]" />
        <div className="ml-[2px] h-[22px] w-[2px] bg-[#777]" />
        <svg width="18" height="18" viewBox="0 0 18 18" className="ml-[14px] block"><circle cx="9" cy="9" r="9" fill="#333" /><path d="M4 9H14" stroke="#eee" strokeWidth="2.400" /></svg>
        <Fit w={182} className="ml-[7px] -mt-[2px]">SKETCH PALETTE</Fit>
      </div>
      <div className="flex h-[724px] flex-col border-b-2 border-[#c8c8c8]">
        <div className="flex h-[60px] items-center pl-[17px] font-bold">
          <svg width="18" height="12" viewBox="0 0 18 12" className="block"><path d="M0 0H18L9 12Z" fill="#333" /></svg>
          <Fit w={89} className="ml-[13px]">Options</Fit>
        </div>
        {OPTIONS.map(([t, w]) => (
          <div key={t} className="flex h-[60px] items-center pb-px pl-[24px]"><Fit w={w}>{t}</Fit></div>
        ))}
      </div>
      <div className="h-[72px] border-b-2 border-[#c8c8c8]" />
    </div>
  );
}

/* ---------- navigation toolbar ---------- */
const NavTri = ({ x }: { x: number }) => <path d={`M${x} 1492H${x + 11.5}L${x + 5.75} 1500Z`} fill="#333" />;
function NavBar() {
  return (
    <div className="absolute top-[1162px] left-[896px] flex h-[48px] w-[474px] bg-[#f1f1f1]">
      <Art x={896} y={1472} w={64} h={48}>
        <ellipse cx="918.500" cy="1497" rx="14" ry="5" stroke="#333" strokeWidth="1.600" />
        <path d="M918.500 1480.500L925 1489H921.500V1509H915.500V1489H912Z" fill="#fff" stroke="#444" strokeWidth="1.300" />
        <path d="M904 1500L911 1496V1505Z" fill="#222" />
        <path d="M906 1500.500Q914 1503 920 1502" stroke="#333" strokeWidth="1.600" />
        <NavTri x={944.5} />
      </Art>
      <Art x={960} y={1472} w={48} h={48}>
        <path d="M971 1490L979 1483.500V1486L990 1484.500V1490Z" fill="#999" stroke="#444" />
        <rect x="971" y="1491" width="26.500" height="17.500" fill="#f4f5f7" stroke="#3a3a3a" strokeWidth="1.600" />
        <rect x="975" y="1494.500" width="18.500" height="10" fill="#a9afb9" stroke="#444" strokeWidth="1.300" />
      </Art>
      <Art x={1008} y={1472} w={56} h={48}>
        <path d="M1030 1509C1027 1503 1024 1501 1021.500 1497C1021 1494 1025 1494 1028 1498.500L1029 1499L1024.500 1486.500C1024 1483.500 1027.500 1483 1028.500 1486L1032 1494L1031.500 1483C1031.500 1480 1035 1480 1035.500 1483L1036.500 1494L1039.500 1483C1040.500 1480.500 1043.500 1481.500 1043 1484.500L1041 1495L1046.500 1488.500C1048.500 1487 1050.500 1488.500 1049.500 1491C1046 1497 1047 1503 1042 1509Z" fill="#fff" stroke="#444" strokeWidth="1.400" />
      </Art>
      <Art x={1064} y={1472} w={54} h={48}>
        <path d="M1092 1499L1101 1508" stroke="#333" strokeWidth="4.500" strokeLinecap="round" />
        <circle cx="1084" cy="1491" r="10" fill="#eef6f8" stroke="#555" strokeWidth="1.600" />
        <path d="M1096 1484H1103M1099.500 1480.500V1487.500M1096 1490H1103" stroke="#333" strokeWidth="1.300" />
      </Art>
      <Art x={1118} y={1472} w={64} h={48}>
        <rect x="1125.500" y="1481.500" width="29" height="28.500" stroke="#777" strokeDasharray="4 2" />
        <path d="M1145 1500L1152.500 1508" stroke="#333" strokeWidth="4.500" strokeLinecap="round" />
        <circle cx="1137" cy="1492" r="10.500" fill="#eef6f8" stroke="#555" strokeWidth="1.600" />
        <NavTri x={1166.5} />
      </Art>
      <Art x={1182} y={1472} w={60} h={48}>
        <path d="M1203 1505H1209V1508H1213V1510H1199V1508H1203Z" fill="#ddd" stroke="#666" strokeWidth="1.200" />
        <rect x="1191.500" y="1480.500" width="29" height="24" rx="1" fill="#f4f5f7" stroke="#444" strokeWidth="1.500" />
        <rect x="1194.500" y="1483.500" width="23" height="18" fill="#8fb1de" stroke="#36588c" strokeWidth="1.400" />
        <NavTri x={1226} />
      </Art>
      <Art x={1242} y={1472} w={64} h={48}>
        <defs><linearGradient id="navGrid" x1="0" y1="0" x2="0" y2="1"><stop offset="0" stopColor="#fff" /><stop offset="1" stopColor="#9aa0b4" /></linearGradient></defs>
        <rect x="1254" y="1481.500" width="28" height="28" fill="url(#navGrid)" stroke="#444" strokeWidth="1.400" />
        <path d="M1258 1481V1509M1262 1481V1509M1266 1481V1509M1270 1481V1509M1274 1481V1509M1278 1481V1509M1254 1485.500H1282M1254 1489.500H1282M1254 1493.500H1282M1254 1497.500H1282M1254 1501.500H1282M1254 1505.500H1282" stroke="#666" strokeWidth="0.900" />
        <NavTri x={1288} />
      </Art>
      <Art x={1306} y={1472} w={64} h={48}>
        <rect x="1315.500" y="1483.500" width="28" height="24" fill="#8eb2df" stroke="#2c4b7c" strokeWidth="1.400" />
        <path d="M1329.500 1483V1508M1315 1495.500H1344" stroke="#2c4b7c" strokeWidth="1.400" />
        <path d="M1318 1486H1327V1493H1318ZM1332 1486H1341V1493H1332ZM1318 1498H1327V1505H1318ZM1332 1498H1341V1505H1332Z" stroke="#6f94c8" fill="#a2c1e8" />
        <NavTri x={1350} />
      </Art>
    </div>
  );
}

/* ---------- timeline ---------- */
function Timeline() {
  return (
    <div className="flex h-[72px] shrink-0 flex-col bg-[#f0f0f0]">
      <div className="h-[8px] bg-[#ccc]" />
      <div className="flex h-[2px] bg-[#dedede]"><div className="w-[202px] bg-[#ccc]" /></div>
      <div className="flex h-[62px]">
        <Art x={0} y={1542} w={42} h={62}><path d="M3 1590L22 1576V1604ZM24 1584H28V1596H24Z" fill="#505052" /></Art>
        <Art x={42} y={1542} w={48} h={62}><path d="M54 1573.500L78 1590L54 1606.500Z" fill="#505052" /></Art>
        <Art x={90} y={1542} w={50} h={62}><path d="M102 1584H106V1596H102ZM108 1576L128 1590L108 1604Z" fill="#505052" /></Art>
        <Art x={140} y={1542} w={50} h={62}><path d="M154 1576L174 1590V1576H178V1604H174V1590L154 1604Z" fill="#505052" /></Art>
        <Art x={190} y={1542} w={100} h={62}>
          <rect x="216" y="1564" width="48" height="48" rx="4" fill="#0696d7" />
          <path d="M226 1574H252M226 1600H240" stroke="#2f80ba" strokeWidth="1.600" />
          <path d="M225.500 1573V1601M252 1573V1589" stroke="#1b86f0" strokeWidth="1.600" />
          <path d="M232 1580V1594M232 1580.500H245C246 1587 242 1592 235 1594" stroke="#3477a3" strokeWidth="1.600" />
          <path d="M242 1600L243 1596L248 1591L252 1595L247 1600Z" fill="#f9bb3c" />
          <circle cx="252.500" cy="1591" r="3" fill="#ee3135" />
          <path d="M252 1560H276V1567L266 1578V1604H262V1578L252 1567Z" fill="#666" />
        </Art>
      </div>
    </div>
  );
}

export default function App() {
  return (
    <div className="flex h-[1604px] w-[2104px] flex-col overflow-hidden bg-[#f1f1f1]">
      <MenuBar />
      <TitleBar />
      <TabBar />
      <Ribbon />
      <main className="relative h-[1222px] shrink-0 overflow-hidden">
        <Canvas />
        <Browser />
        <div className={"absolute top-[1164px] left-0 " + UI}>
          <PanelHeader label="COMMENTS" width={125} shift="-ml-[12px]" plus top="" />
        </div>
        <div className={"absolute top-[1177px] left-[1917px] text-[22px] leading-[36px] font-bold text-[#3c3c3c] " + UI}>
          <Fit w={250}>1 Sketch Line | Length</Fit>
        </div>
        <NavBar />
        <Palette />
      </main>
      <Timeline />
    </div>
  );
}
